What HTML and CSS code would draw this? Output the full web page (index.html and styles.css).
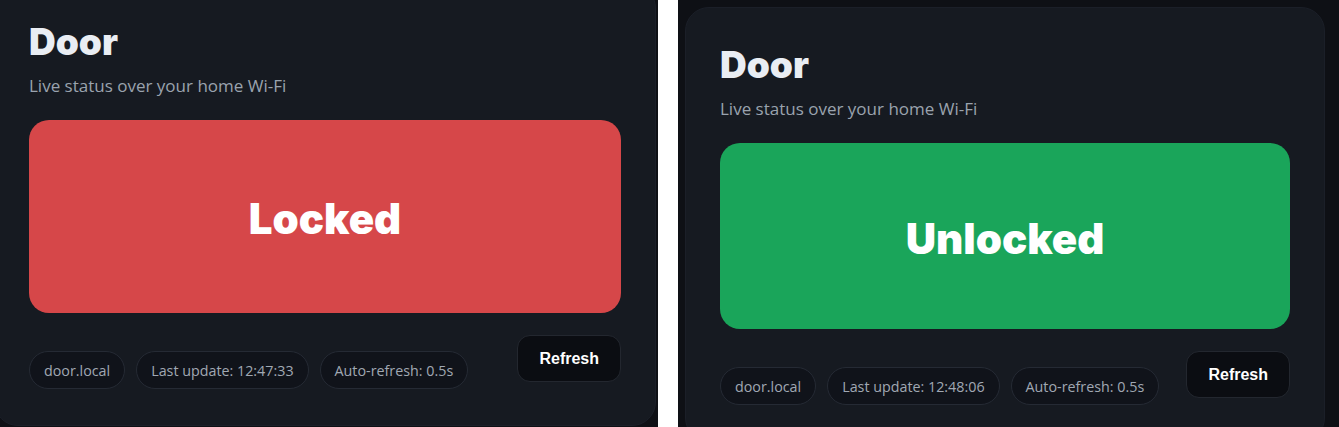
FILE: index.html
```html
<!DOCTYPE html>
<html lang="en">
<head>
<meta charset="utf-8">
<title>Door</title>
<link rel="stylesheet" href="styles.css">
</head>
<body>
<main class="shots">
  <section class="frame frame--left">
    <article class="card card--left">
      <h1 class="title">Door</h1>
      <p class="subtitle">Live status over your home Wi-Fi</p>
      <div class="status status--locked">Locked</div>
      <footer class="footer">
        <ul class="pills">
          <li class="pill">door.local</li>
          <li class="pill">Last update: 12:47:33</li>
          <li class="pill">Auto-refresh: 0.5s</li>
        </ul>
        <button class="refresh" type="button">Refresh</button>
      </footer>
    </article>
  </section>
  <section class="frame frame--right">
    <article class="card card--right">
      <h1 class="title">Door</h1>
      <p class="subtitle">Live status over your home Wi-Fi</p>
      <div class="status status--unlocked">Unlocked</div>
      <footer class="footer">
        <ul class="pills">
          <li class="pill">door.local</li>
          <li class="pill">Last update: 12:48:06</li>
          <li class="pill">Auto-refresh: 0.5s</li>
        </ul>
        <button class="refresh" type="button">Refresh</button>
      </footer>
    </article>
  </section>
</main>
</body>
</html>
```

FILE: styles.css
```css
* { box-sizing: border-box; }

html, body {
  margin: 0;
  padding: 0;
  background: #ffffff;
  height: 427px;
  overflow: hidden;
}

body {
  font-family: "Open Sans", "Noto Sans", sans-serif;
}

.shots {
  display: flex;
  gap: 20px;
  height: 427px;
}

.frame {
  background: #0e1015;
  overflow: hidden;
  height: 427px;
}

.frame--left {
  width: 658px;
  flex: 0 0 658px;
}

.frame--right {
  flex: 1 1 auto;
}

.card {
  background: #161a21;
  border: 1px solid #1b1f28;
  border-radius: 24px;
  padding: 35px 34px 36px;
}

.card--left {
  width: 662px;
  margin: -16px 0 0 -6px;
}

.card--right {
  width: 640px;
  margin: 7px 0 0 7px;
}

.title {
  margin: 0;
  font-family: "Inter", "Lato", sans-serif;
  font-weight: 900;
  font-size: 37px;
  line-height: 43px;
  color: #e9edf3;
  letter-spacing: 0;
}

.subtitle {
  margin: 11px 0 0;
  font-size: 17px;
  line-height: 24px;
  color: #9aa3ae;
}

.status {
  margin-top: 22px;
  padding-top: 4px;
  border-radius: 20px;
  display: flex;
  align-items: center;
  justify-content: center;
  font-family: "Inter", "Lato", sans-serif;
  font-weight: 900;
  font-size: 42px;
  letter-spacing: 0;
  color: #ffffff;
}

.status--locked {
  background: #d64749;
  height: 193px;
}

.status--unlocked {
  background: #1aa55a;
  height: 186px;
}

.footer {
  margin-top: 22px;
  display: flex;
  justify-content: space-between;
  align-items: flex-start;
}

.pills {
  list-style: none;
  margin: 16px 0 0;
  padding: 0;
  display: flex;
  gap: 11px;
}

.pill {
  background: #10131a;
  border: 1px solid #252a34;
  border-radius: 999px;
  padding: 9px 14px 8px;
  font-size: 14.3px;
  line-height: 19px;
  color: #a0a8b3;
  white-space: nowrap;
}

.refresh {
  height: 47px;
  padding: 0 21px;
  background: #0b0d12;
  border: 1px solid #23272f;
  border-radius: 13px;
  color: #ffffff;
  font-family: "Liberation Sans", Arial, sans-serif;
  font-weight: 700;
  font-size: 16px;
}
```
